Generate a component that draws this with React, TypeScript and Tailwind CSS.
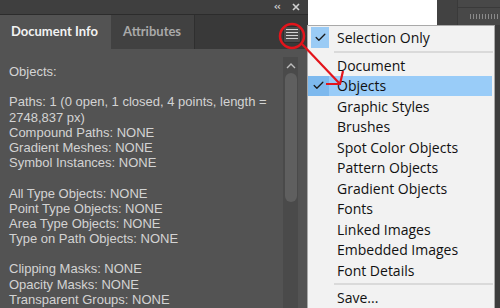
import { Check } from "lucide-react";

const infoLines = [
  "Objects:",
  "",
  "Paths: 1 (0 open, 1 closed, 4 points, length =",
  "2748,837 px)",
  "Compound Paths: NONE",
  "Gradient Meshes: NONE",
  "Symbol Instances: NONE",
  "",
  "All Type Objects: NONE",
  "Point Type Objects: NONE",
  "Area Type Objects: NONE",
  "Type on Path Objects: NONE",
  "",
  "Clipping Masks: NONE",
  "Opacity Masks: NONE",
  "Transparent Groups: NONE",
];

const menuItems = [
  "Document",
  "Objects",
  "Graphic Styles",
  "Brushes",
  "Spot Color Objects",
  "Pattern Objects",
  "Gradient Objects",
  "Fonts",
  "Linked Images",
  "Embedded Images",
  "Font Details",
];

function DocInfoPanel() {
  return (
    <div className="flex h-full w-[308px] flex-col bg-[#535353]">
      {/* title strip */}
      <div className="flex h-[15px] items-center justify-end gap-[12px] border-b border-[#2c2c2c] bg-[#3f3f3f] pr-[8px] text-[#cfcfcf]">
        <span className="text-[10px] font-bold leading-none tracking-[-1px] [font-family:'DejaVu_Sans',sans-serif]">
          ‹‹
        </span>
        <svg width="8" height="8" viewBox="0 0 8 8">
          <path d="M1 1L7 7M7 1L1 7" stroke="#d0d0d0" strokeWidth="1.6" />
        </svg>
      </div>

      {/* tabs */}
      <div className="flex h-[34px] items-stretch bg-[#393939] [font-family:Lato,sans-serif]">
        <div className="flex w-[111px] items-center bg-[#535353] pl-[11px] text-[13px] font-bold text-[#f2f2f2]">
          Document Info
        </div>
        <div className="flex w-[84px] items-center border-r border-[#2f2f2f] bg-[#414141] pl-[12px] text-[13px] font-bold text-[#a9a9a9]">
          Attributes
        </div>
        <div className="flex flex-1 items-center justify-end pr-[7px] pt-[4px]">
          <div className="flex h-[17px] w-[18px] flex-col items-center justify-center gap-[1.5px] rounded-[2px] border border-[#2e2e2e] bg-[#4a4a4a]">
            <span className="h-[1.5px] w-[12px] bg-[#d2d2d2]" />
            <span className="h-[1.5px] w-[12px] bg-[#d2d2d2]" />
            <span className="h-[1.5px] w-[12px] bg-[#d2d2d2]" />
            <span className="h-[1.5px] w-[12px] bg-[#d2d2d2]" />
          </div>
        </div>
      </div>

      {/* body */}
      <div className="flex min-h-0 flex-1 overflow-hidden">
        <div className="flex-1 pl-[9px] pt-[15px] text-[13px] leading-[15.2px] text-[#d3d3d3] [font-family:'Liberation_Sans',sans-serif]">
          {infoLines.map((l, i) => (
            <div key={i} className="h-[15.2px] whitespace-nowrap">
              {l}
            </div>
          ))}
        </div>
        <div className="mr-[10px] mt-[8px] flex w-[15px] flex-col items-center bg-[#4a4a4a]">
          <svg width="10" height="6" viewBox="0 0 10 6" className="mt-[6px]">
            <path d="M1 5L5 1L9 5" fill="none" stroke="#bdbdbd" strokeWidth="1.4" />
          </svg>
          <div className="mt-[4px] h-[129px] w-[12px] rounded-full bg-[#5f5f5f]" />
        </div>
      </div>
    </div>
  );
}

function Menu() {
  return (
    <div className="absolute left-[307px] top-[25px] h-[300px] w-[188px] border border-[#a9a9a9] bg-[#f2f2f2] pt-px text-[14px] text-[#111] [font-family:'Open_Sans',sans-serif]">
      <div className="relative flex h-[21px] items-center pl-[29px]">
        <div className="absolute left-[3px] top-0 flex h-[21px] w-[18px] items-center justify-center bg-[#9acbf5]">
          <Check size={13} strokeWidth={2.4} color="#1a1a1a" />
        </div>
        Selection Only
      </div>
      <div className="flex h-[7px] items-center pl-[26px] pr-px">
        <div className="h-[2px] w-full bg-[#dadada]" />
      </div>
      {menuItems.map((item) =>
        item === "Objects" ? (
          <div
            key={item}
            className="relative mr-[2px] flex h-[20.5px] items-center bg-[#99ccf8] pl-[29px]"
          >
            <div className="absolute left-0 top-0 flex h-full w-[21px] items-center justify-center bg-[#7db9ee]">
              <Check size={13} strokeWidth={2.4} color="#1a1a1a" />
            </div>
            {item}
          </div>
        ) : (
          <div key={item} className="flex h-[20.5px] items-center pl-[29px]">
            {item}
          </div>
        )
      )}
      <div className="flex h-[7px] items-center pl-[26px] pr-px">
        <div className="h-[2px] w-full bg-[#dadada]" />
      </div>
      <div className="flex h-[20px] items-center pl-[29px]">Save...</div>
    </div>
  );
}

export default function App() {
  return (
    <div className="relative flex h-[308px] w-[500px] overflow-hidden bg-[#3d3d3d]">
      <DocInfoPanel />
      <div className="h-[25px] w-[129px] bg-white" />
      <div className="flex flex-1 flex-col">
        <div className="flex h-[25px] bg-[#484848]">
          <div className="w-[21px] border-r border-[#3a3a3a] bg-[#424242]" />
          <div className="flex flex-1 flex-col">
            <div className="h-[8px] border-b border-[#3a3a3a]" />
            <div className="flex items-center gap-[2px] pl-[12px] pt-[6px]">
              {Array.from({ length: 10 }).map((_, i) => (
                <span key={i} className="h-[5px] w-px bg-[#8a8a8a]" />
              ))}
            </div>
          </div>
        </div>
      </div>
      <Menu />
      <svg className="pointer-events-none absolute left-0 top-0" width="500" height="308">
        <circle cx="292" cy="36" r="12" fill="none" stroke="#e3141b" strokeWidth="2.5" />
        <path d="M302 44L340 84" stroke="#e3141b" strokeWidth="2.2" />
        <path d="M326 84L340 84L343 71" fill="none" stroke="#e3141b" strokeWidth="2.2" />
      </svg>
    </div>
  );
}
